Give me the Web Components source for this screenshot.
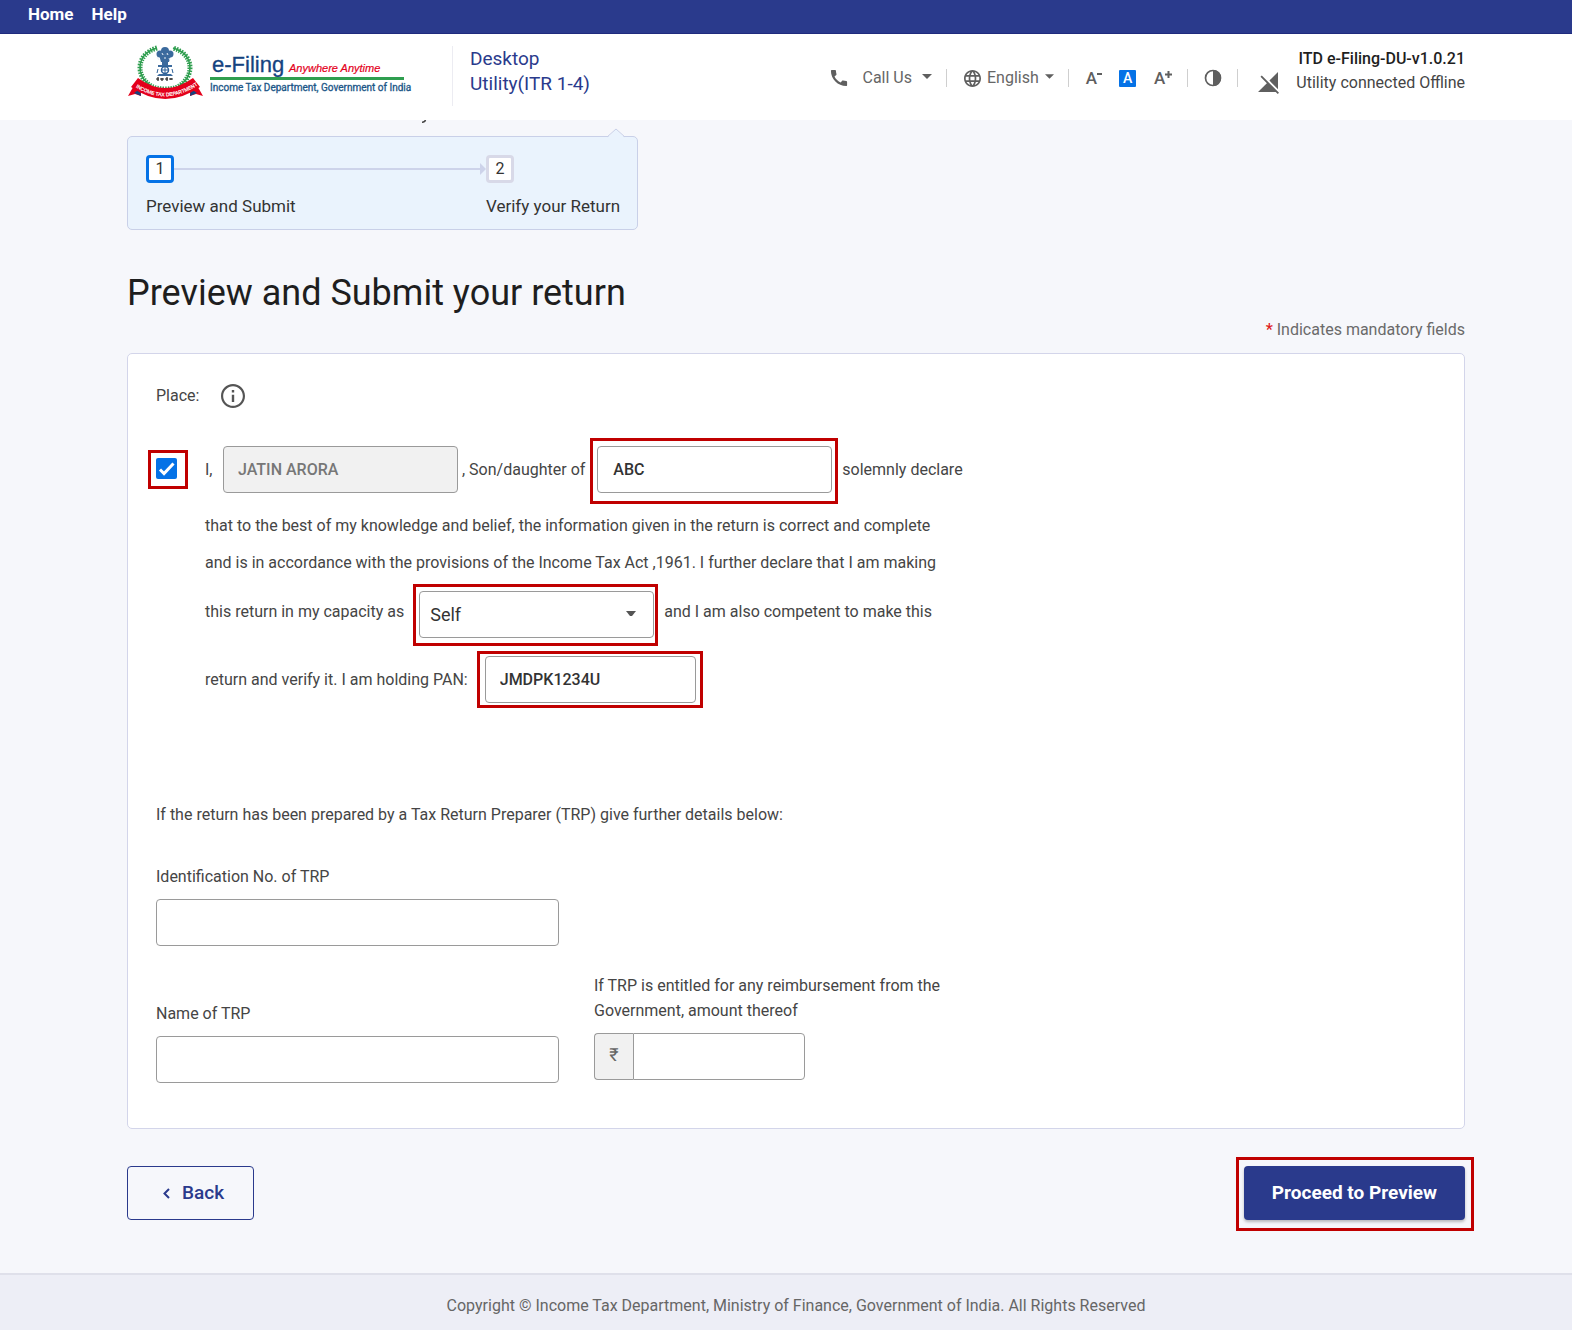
<!DOCTYPE html>
<html lang="en">
<head>
<meta charset="utf-8">
<meta name="viewport" content="width=device-width, initial-scale=1">
<title>Preview and Submit your return</title>
<style>
  html, body { margin: 0; min-height: 100%; }
  body {
    font-family: Roboto, "Liberation Sans", sans-serif;
    font-size: 16px; line-height: 24px; color: #454545; background: #f6f7fb;
    --navy: #2a3a8c; --blue: #0572e6; --line: #c9d0e8; --field: #9a9a9a; --mark: #c00000;
  }
</style>
</head>
<body>
<app-page></app-page>
<script>
const define = (name, html) => customElements.define(name, class extends HTMLElement {
  constructor() {
    super();
    const t = document.createElement('template');
    t.innerHTML = html;
    this.attachShadow({ mode: 'open' }).append(t.content.cloneNode(true));
  }
});

/* Red frame drawn around whatever is slotted in */
define('mark-box', `
<style>
  :host { display: inline-flex; position: relative; --t: 8px; --r: 8px; --b: 8px; --l: 8px; }
  :host::after { content: ""; position: absolute; pointer-events: none; border: 3px solid var(--mark);
    top: calc(0px - var(--t)); right: calc(0px - var(--r)); bottom: calc(0px - var(--b)); left: calc(0px - var(--l)); }
</style><slot></slot>`);

define('top-nav', `
<style>
  :host { display: block; background: var(--navy); border-bottom: 1px solid #1f2b7d; }
  nav { display: flex; gap: 18px; padding: 2px 28px 7px; }
  a { color: #fff; font-weight: 700; font-size: 17px; line-height: 24px; text-decoration: none; }
</style>
<nav><a href="#">Home</a><a href="#">Help</a></nav>`);

define('efiling-logo', `
<style>:host { display: block; flex: none; } svg { display: block; overflow: visible; }</style>
<svg width="278" height="60" viewBox="0 -1 278 60" role="img" aria-label="e-Filing logo">
  <g fill="none" stroke="#2f9e4f">
    <path d="M30 4C9 10 8 32 24 42M46 4C67 10 68 32 52 42" stroke-width="1.500"/>
    <path d="M30 4C9 10 8 32 24 42C30 46 46 46 52 42C68 32 67 10 46 4" stroke-width="5" stroke-dasharray="1.500 1.200"/>
  </g>
  <g fill="#3b6a9d">
    <circle cx="38" cy="7" r="4"/><circle cx="33" cy="10" r="3.500"/><circle cx="43" cy="10" r="3.500"/>
    <path d="M32 11h12l-2 7h-8zM35 18h6v3h-6zM31 21h14v2H31zM32 30h12l2 2H30z"/>
  </g>
  <circle cx="38" cy="26" r="3.500" fill="none" stroke="#2d6098" stroke-width="1.500"/>
  <path d="M34 26h8M38 22v8M31 25l-1 4M45 25l1 4" stroke="#2d6098"/>
  <path d="M30 13l2 3M35 9l1 2M40 9l1 2M37 14h2M42 14l1 2" stroke="#e8eff6"/>
  <path d="M29 35h3m1 0h4m1 0h3m1 0h4M31 33v4M35 34v3M40 33v4M44 34v2" stroke="#222" stroke-width="1.200"/>
  <path d="M1 52l8-14 5 2v12l-6-2zM76 52l-8-14-5 2v12l6-2z" fill="#e4001b"/>
  <path d="M7 49l7 3-1-7zM70 49l-7 3 1-7z" fill="#15437f"/>
  <path d="M11 34Q38 54 66 34L73 43Q38 67 4 43Z" fill="#e4001b"/>
  <path id="ribbon" d="M7 42Q38 63 71 41" fill="none"/>
  <text font-family="Liberation Sans, sans-serif" font-size="5" fill="#fff" stroke="#fff" stroke-width=".2"><textPath href="#ribbon" startOffset="2">INCOME TAX DEPARTMENT</textPath></text>
  <text x="85" y="28" font-family="Liberation Sans, sans-serif" font-size="22" fill="#15437f" stroke="#15437f" stroke-width=".3">e-Filing</text>
  <text x="162" y="28" font-family="Liberation Sans, sans-serif" font-size="11" font-style="italic" fill="#e4001b" stroke="#e4001b" stroke-width=".2">Anywhere Anytime</text>
  <path d="M83 34.500h194" stroke="#2f9e4f" stroke-width="3"/>
  <text x="83" y="47" font-family="Roboto, sans-serif" font-size="10" fill="#1b5687" stroke="#1b5687" stroke-width=".3">Income Tax Department, Government of India</text>
</svg>`);

define('site-header', `
<style>
  :host { display: block; background: #fff; }
  header { display: flex; align-items: flex-start; padding: 9px 107px 9px 127px; min-height: 68px; }
  .name { margin: 3px 0 0 47px; padding-left: 17px; border-left: 1px solid #ececf2; min-height: 60px;
    color: var(--navy); font-size: 19px; line-height: 25px; width: 140px; }
  .tools { margin-left: auto; display: flex; align-items: center; padding-top: 25px; height: 20px; color: #666; }
  button { all: unset; display: flex; align-items: center; cursor: pointer; color: #666; font: 400 16px/20px Roboto, sans-serif; }
  svg { display: block; fill: #5f5f5f; flex: none; }
  i { width: 1px; height: 18px; background: #cfcfcf; }
  .a { font-weight: 500; font-size: 17px; color: #5f5f5f; }
  .a svg { margin-bottom: 8px; }
  .on { background: var(--blue); color: #fff; width: 17px; height: 17px; justify-content: center; border-radius: 1px; font-size: 14px; font-weight: 500; }
  .status { margin-left: 17px; text-align: right; line-height: 24px; padding-top: 4px; }
  .status div { white-space: nowrap; }
  .status b { font-weight: 500; color: #1e1e1e; }
</style>
<header>
  <efiling-logo></efiling-logo>
  <div class="name">Desktop Utility(ITR 1-4)</div>
  <div class="tools">
    <button style="gap:15px"><svg width="18" height="18" viewBox="2 2 20 20"><path d="M20.01 15.38c-1.23 0-2.42-.2-3.53-.56-.35-.12-.74-.03-1.01.24l-1.57 1.97c-2.83-1.35-5.48-3.9-6.89-6.83l1.95-1.66c.27-.28.35-.67.24-1.02-.37-1.11-.56-2.3-.56-3.53 0-.54-.45-.99-.99-.99H4.19C3.65 3 3 3.24 3 3.99 3 13.28 10.73 21 20.01 21c.71 0 .99-.63.99-1.18v-3.45c0-.54-.45-.99-.99-.99z"/></svg>Call Us</button>
    <svg style="margin:0 14px 3px 10px" width="10" height="6" viewBox="0 0 10 6"><path d="M0 0h10L5 5z"/></svg>
    <i></i>
    <button style="margin-left:17px;gap:6px"><svg width="17" height="17" viewBox="2 2 20 20"><path d="M11.990 2C6.470 2 2 6.480 2 12s4.470 10 9.990 10C17.520 22 22 17.520 22 12S17.520 2 11.990 2zm6.930 6h-2.950c-.32-1.250-.78-2.450-1.380-3.560 1.840.63 3.370 1.910 4.330 3.560zM12 4.040c.83 1.200 1.480 2.530 1.910 3.960h-3.820c.43-1.430 1.080-2.760 1.910-3.960zM4.260 14C4.100 13.360 4 12.690 4 12s.1-1.360.26-2h3.380c-.08.66-.14 1.320-.14 2 0 .68.06 1.340.14 2H4.260zm.82 2h2.950c.32 1.250.78 2.450 1.380 3.560-1.840-.63-3.370-1.900-4.330-3.560zm2.950-8H5.080c.96-1.660 2.490-2.930 4.330-3.560C8.810 5.550 8.350 6.750 8.030 8zM12 19.960c-.83-1.200-1.480-2.530-1.910-3.960h3.820c-.43 1.430-1.080 2.760-1.910 3.960zM14.340 14H9.660c-.09-.66-.16-1.320-.16-2 0-.68.07-1.350.16-2h4.680c.09.65.16 1.320.16 2 0 .68-.07 1.340-.16 2zm.25 5.560c.6-1.110 1.060-2.310 1.380-3.560h2.950c-.96 1.650-2.490 2.930-4.330 3.560zM16.360 14c.08-.66.14-1.320.14-2 0-.68-.06-1.340-.14-2h3.380c.16.64.26 1.310.26 2s-.1 1.360-.26 2h-3.380z"/></svg>English<svg style="margin-bottom:3px" width="9" height="6" viewBox="0 0 10 6"><path d="M0 0h10L5 5z"/></svg></button>
    <i style="margin:0 17px 0 14px"></i>
    <button class="a" aria-label="Decrease text size">A<svg width="5" height="4"><path d="M0 1h5v2H0z"/></svg></button>
    <button class="on" style="margin:0 18px 0 17px">A</button>
    <button class="a" aria-label="Increase text size">A<svg width="7" height="7"><path d="M0 2.500h2.500V0h2v2.500H7v2H4.500V7h-2V4.500H0z"/></svg></button>
    <i style="margin:0 16px 0 15px"></i>
    <button aria-label="Contrast"><svg width="18" height="18" viewBox="0 0 18 18"><circle cx="9" cy="9" r="7.500" fill="none" stroke="#5f5f5f" stroke-width="1.700"/><path d="M9 1a8 8 0 0 1 0 16z"/></svg></button>
    <i style="margin:0 20px 0 15px"></i>
    <svg style="margin-top:9px" width="21" height="22" viewBox="1 1 21 22"><path d="M21 1l-8.590 8.590L21 18.180V1zM4.770 4.500L3.500 5.770l6.360 6.360L1 21h17.730l2 2L22 21.730 4.770 4.500z"/></svg>
  </div>
  <div class="status"><div><b>ITD e-Filing-DU-v1.0.21</b></div><div>Utility connected Offline</div></div>
</header>`);

define('step-tracker', `
<style>
  :host { display: block; position: relative; box-sizing: border-box; width: 511px; max-width: 100%; padding: 18px 18px 11px;
    background: #eaf3fd; border: 1px solid var(--line); border-radius: 5px; }
  .peak { position: absolute; top: -9px; right: 11px; }
  svg { display: block; }
  .row, .names { display: flex; align-items: center; justify-content: space-between; }
  .n { box-sizing: border-box; width: 28px; height: 28px; border: 3px solid #d8d9e8; border-radius: 4px; background: #fff;
    text-align: center; line-height: 22px; color: #333; }
  .n.now { border-color: var(--blue); }
  .line { flex: 1; height: 2px; background: #cdd3ea; }
  .two { display: flex; align-items: center; width: 139px; }
  .names { font-size: 17px; color: #333; padding-top: 11px; }
  .names span + span { width: 133px; white-space: nowrap; }
</style>
<svg class="peak" width="20" height="10" viewBox="0 0 20 10"><path d="M1 10l9-9 9 9z" fill="#eaf3fd"/><path d="M1 9l9-8 9 8" fill="none" stroke="#c9d0e8"/></svg>
<div class="row"><span class="n now">1</span><span class="line"></span>
  <span class="two"><svg width="6" height="12"><path d="M0 0l6 6-6 6z" fill="#cdd3ea"/></svg><span class="n">2</span></span></div>
<div class="names"><span>Preview and Submit</span><span>Verify your Return</span></div>`);

define('declaration-form', `
<style>
  :host { display: block; }
  .place { display: flex; align-items: center; gap: 22px; height: 24px; }
  .decl { display: flex; margin-top: 38px; }
  .tick { margin-top: 12px; height: 21px; margin-right: 28px; --t: 8px; --b: 10px; --r: 11px; }
  .tick input { appearance: none; margin: 0; width: 21px; height: 21px; background: var(--blue); border-radius: 2px; }
  .tick svg { position: absolute; left: 0; top: 0; pointer-events: none; }
  .row { display: flex; align-items: center; }
  p { margin: 14px 0 10px; line-height: 37px; white-space: pre-line; }
  input, select { font-family: inherit; }
  .f { box-sizing: border-box; width: 235px; height: 47px; border: 1px solid var(--field); border-radius: 4px; padding: 0 14px;
    font-size: 16px; font-weight: 500; color: #333; background: #fff; outline: 0; }
  .f:disabled { background: #f1f1f1; color: #777; }
  select.f { appearance: none; font-size: 18px; font-weight: 400; padding: 0 10px; }
  .caret { position: absolute; right: 18px; top: 20px; pointer-events: none; }
</style>
<div class="place"><span>Place:</span><svg width="24" height="24" viewBox="2 2 20 20" fill="#555"><path d="M11 7h2v2h-2zm0 4h2v6h-2zm1-9C6.480 2 2 6.480 2 12s4.480 10 10 10 10-4.480 10-10S17.520 2 12 2zm0 18.200c-4.500 0-8.200-3.700-8.200-8.200S7.500 3.800 12 3.800s8.200 3.700 8.200 8.200-3.700 8.200-8.200 8.200z"/></svg></div>
<div class="decl">
  <mark-box class="tick"><input type="checkbox" id="agree" checked aria-label="I declare"><svg width="21" height="21" viewBox="0 0 21 21"><path d="M4 11.500l4 4L17.500 5.500" fill="none" stroke="#fff" stroke-width="3"/></svg></mark-box>
  <div>
    <div class="row">
      <label for="who" style="width:18px">I,</label><input class="f" id="who" value="JATIN ARORA" disabled>
      <label for="parent" style="padding:0 12px 0 4px">, Son/daughter of</label>
      <mark-box style="--b:11px;--r:6px;--l:7px"><input class="f" id="parent" value="ABC" style="padding-left:15px"></mark-box>
      <span style="padding-left:10px">solemnly declare</span>
    </div>
    <p>that to the best of my knowledge and belief, the information given in the return is correct and complete
and is in accordance with the provisions of the Income Tax Act ,1961. I further declare that I am making</p>
    <div class="row">
      <label for="cap" style="padding:0 15px 6px 0">this return in my capacity as</label>
      <mark-box style="--t:7px;--r:4px;--l:6px"><select class="f" id="cap"><option>Self</option></select><svg class="caret" width="10" height="6" viewBox="0 0 10 6"><path d="M0 0h10L6 5H4z" fill="#555"/></svg></mark-box>
      <span style="padding:0 0 6px 10px">and I am also competent to make this</span>
    </div>
    <div class="row" style="margin-top:18px">
      <label for="pan" style="padding-right:17px">return and verify it. I am holding PAN:</label>
      <mark-box style="--t:5px;--b:5px;--r:7px"><input class="f" id="pan" value="JMDPK1234U" style="width:211px"></mark-box>
    </div>
  </div>
</div>`);

define('trp-form', `
<style>
  :host { display: block; margin-top: 100px; }
  .cols { display: flex; align-items: flex-end; gap: 35px; }
  label { display: block; }
  input { display: block; box-sizing: border-box; width: 100%; height: 47px; border: 1px solid var(--field); border-radius: 4px;
    font: 500 16px Roboto, sans-serif; padding: 0 14px; background: #fff; outline: 0; }
  .f { width: 403px; } .f label { padding-bottom: 10px; }
  .g { padding-bottom: 3px; } .g label { line-height: 25px; padding-bottom: 10px; width: 380px; }
  .money { display: flex; width: 211px; }
  .money span { box-sizing: border-box; flex: none; width: 39px; border: 1px solid var(--field); border-right: 0; border-radius: 4px 0 0 4px;
    background: #f1f1f1; text-align: center; line-height: 42px; font-size: 18px; color: #666; }
  .money input { border-radius: 0 4px 4px 0; }
</style>
<div>If the return has been prepared by a Tax Return Preparer (TRP) give further details below:</div>
<div class="f" style="padding:38px 0 27px"><label for="id">Identification No. of TRP</label><input id="id"></div>
<div class="cols">
  <div class="f"><label for="nm">Name of TRP</label><input id="nm"></div>
  <div class="g"><label for="amt">If TRP is entitled for any reimbursement from the Government, amount thereof</label>
    <div class="money"><span>₹</span><input id="amt"></div></div>
</div>`);

define('page-actions', `
<style>
  :host { display: flex; justify-content: space-between; margin-top: 37px; }
  button { box-sizing: border-box; height: 54px; border-radius: 4px; font: 500 19px/24px Roboto, sans-serif; cursor: pointer; padding: 0 28px; }
  .back { display: flex; align-items: center; gap: 12px; border: 1px solid var(--navy); background: transparent; color: var(--navy); padding: 0 29px 0 35px; }
  .go { border: 0; color: #fff; background: var(--navy); font-weight: 700; box-shadow: 0 2px 3px rgba(0,0,0,.25); }
</style>
<button class="back"><svg width="7" height="11" viewBox="0 0 7 11"><path d="M6 1L1.500 5.500 6 10" fill="none" stroke="#2a3a8c" stroke-width="2"/></svg>Back</button>
<mark-box style="--t:9px;--r:9px;--b:11px;--l:8px"><button class="go">Proceed to Preview</button></mark-box>`);

define('page-footer', `
<style>
  :host { display: block; margin-top: 53px; border-top: 2px solid #dfe0ea; background: #edeef6; text-align: center; color: #666;
    padding: 19px 0 12px 20px; }
</style>Copyright © Income Tax Department, Ministry of Finance, Government of India. All Rights Reserved`);

define('app-page', `
<style>
  :host { display: block; }
  main { padding: 0 107px 0 127px; }
  .over { display: block; height: 16px; padding-left: 295px; }
  h1 { margin: 39px 0 0; font-size: 36px; line-height: 49px; font-weight: 400; color: #1e1e1e; }
  .note { text-align: right; color: #6a6a6a; }
  .note b { color: #e02020; font-weight: 500; }
  .card { margin-top: 11px; background: #fff; border: 1px solid #d3d5ea; border-radius: 5px; padding: 30px 28px 45px; }
</style>
<top-nav></top-nav>
<site-header></site-header>
<main>
  <svg class="over" width="8" height="16"><path d="M0 2.200C2 2.300 3 1.500 3.500 0" fill="none" stroke="#444" stroke-width="1.500"/></svg>
  <step-tracker></step-tracker>
  <h1>Preview and Submit your return</h1>
  <div class="note"><b>*</b> Indicates mandatory fields</div>
  <section class="card"><declaration-form></declaration-form><trp-form></trp-form></section>
  <page-actions></page-actions>
</main>
<page-footer></page-footer>`);
</script>
</body>
</html>
